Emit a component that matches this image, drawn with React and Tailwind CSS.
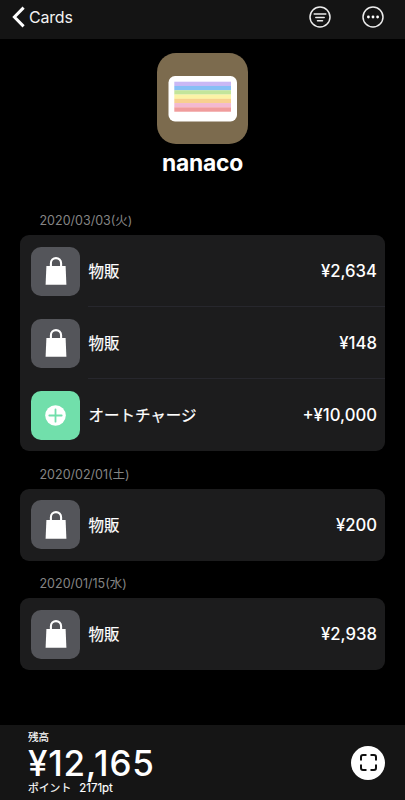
import React from 'react';

const grupos = [
  {
    date: '2020/03/03(火)',
    items: [
      { name: '物販', amount: '¥2,634' },
      { name: '物販', amount: '¥148' },
      { name: 'オートチャージ', amount: '+¥10,000', charge: true },
    ],
  },
  { date: '2020/02/01(土)', items: [{ name: '物販', amount: '¥200' }] },
  { date: '2020/01/15(水)', items: [{ name: '物販', amount: '¥2,938' }] },
];

// card stripes, top to bottom
const stripes = ['#c9b8f5', '#86bff5', '#c3e59b', '#fbf3a6', '#f8d08f', '#f3b9d0', '#f09c9c'];

function Header() {
  return (
    <header className="flex h-[39px] shrink-0 items-center bg-[#141414] pb-[5px] pl-3 pr-[21px]">
      <svg width="13" height="22" viewBox="0 0 13 22" fill="none" stroke="#fff" strokeWidth="3">
        <path d="M11.6 1.6 2.4 11l9.2 9.4" />
      </svg>
      <span className="ml-1 text-[16px] leading-5 tracking-[-0.2px] text-[#f2f2f2]">Cards</span>

      <div className="ml-auto flex gap-[31px]">
        <svg width="22" height="22" viewBox="0 0 22 22" fill="none" stroke="#ececec" strokeWidth="1.5">
          <circle cx="11" cy="11" r="10" />
          <path d="M5.2 8h11.6M6.8 11.4h8.4M8.5 14.7h5" strokeLinecap="round" />
        </svg>
        <svg width="22" height="22" viewBox="0 0 22 22" fill="none" stroke="#ececec" strokeWidth="1.5">
          <circle cx="11" cy="11" r="10" />
          <g fill="#fff" stroke="none">
            <circle cx="6.4" cy="11" r="1.4" />
            <circle cx="11" cy="11" r="1.4" />
            <circle cx="15.6" cy="11" r="1.4" />
          </g>
        </svg>
      </div>
    </header>
  );
}

function CardLogo() {
  return (
    <svg className="mt-[14px]" width="91" height="91" viewBox="0 0 91 91">
      <rect width="91" height="91" rx="19" fill="#7c6b4e" />
      <rect x="11.5" y="23" width="68.5" height="45.5" rx="6.5" fill="#fff" />
      {stripes.map((color, i) => (
        <rect key={color} x="17.3" y={28.7 + i * 4.27} width="56.7" height="4.4" fill={color} />
      ))}
    </svg>
  );
}

function ItemIcon({ charge }) {
  if (charge) {
    return (
      <div className="flex size-[49px] shrink-0 items-center justify-center rounded-[10px] bg-[#71dfab]">
        <svg width="21" height="21" viewBox="0 0 21 21">
          <circle cx="10.5" cy="10.5" r="10.3" fill="#fff" />
          <path d="M10.5 4.3v12.4M4.3 10.5h12.4" stroke="#71dfab" strokeWidth="1.8" strokeLinecap="round" />
        </svg>
      </div>
    );
  }
  return (
    <div className="flex size-[49px] shrink-0 items-center justify-center rounded-[10px] bg-[#54555a]">
      <svg width="22" height="28" viewBox="0 0 22 28" fill="none">
        <path d="M5.9 10V6.2a5.1 5.1 0 0 1 10.2 0V10" stroke="#fff" strokeWidth="2.1" />
        <path d="M1.4 9h19.2l.8 18.8H.6z" fill="#fff" />
      </svg>
    </div>
  );
}

function Row({ item, last }) {
  return (
    <div className="flex h-[72.1px] items-center pl-[11px]">
      <ItemIcon charge={item.charge} />
      <div
        className={`ml-2 flex h-full flex-1 items-center justify-between pr-2 text-white ${
          last ? '' : 'border-b border-[#27272d]'
        }`}
      >
        <span className="pl-[0.5px] pt-px text-[15.5px] [-webkit-text-stroke:0.2px_#fff]">{item.name}</span>
        <span className="pt-px text-[16.7px] font-medium">{item.amount}</span>
      </div>
    </div>
  );
}

export default function App() {
  return (
    <div className="flex h-[800px] w-[405px] flex-col overflow-hidden bg-black font-['Inter','Noto_Sans_CJK_JP',sans-serif]">
      <Header />

      <main className="flex flex-1 flex-col">
        <div className="flex flex-col items-center">
          <CardLogo />
          <h1 className="mt-[5px] text-[22.8px] font-bold leading-7 tracking-[-0.2px] text-white">nanaco</h1>
        </div>

        <div className="mt-[20.7px] px-5">
          {grupos.map((grupo) => (
            <section key={grupo.date}>
              <h2 className="flex h-[37.4px] items-end pb-[5px] pl-[19.5px] text-[12.5px] leading-[18px] text-[#858585]">
                {grupo.date}
              </h2>
              <div className="overflow-hidden rounded-[9px] bg-[#1c1c1d]">
                {grupo.items.map((item, i) => (
                  <Row key={i} item={item} last={i === grupo.items.length - 1} />
                ))}
              </div>
            </section>
          ))}
        </div>
      </main>

      <footer className="flex h-[75px] shrink-0 items-center justify-between bg-[#151515] pl-7 pr-5 text-white">
        <div className="pt-px">
          <p className="text-[10.5px] leading-3 [-webkit-text-stroke:0.15px_#fff]">残高</p>
          <p className="text-[35px] font-medium leading-[38px] tracking-[0.75px]">¥12,165</p>
          <p className="text-[10.8px] leading-3 [-webkit-text-stroke:0.15px_#fff]">
            ポイント<span className="ml-2 text-[11.5px]">2171pt</span>
          </p>
        </div>
        <div className="flex size-[34px] items-center justify-center rounded-full bg-white">
          <svg width="17" height="17" viewBox="0 0 17 17" fill="none" stroke="#111" strokeWidth="2">
            <path d="M1 6.5V3a2 2 0 0 1 2-2h3.5M10.5 1H14a2 2 0 0 1 2 2v3.5M16 10.5V14a2 2 0 0 1-2 2h-3.5M6.5 16H3a2 2 0 0 1-2-2v-3.5" />
          </svg>
        </div>
      </footer>
    </div>
  );
}
